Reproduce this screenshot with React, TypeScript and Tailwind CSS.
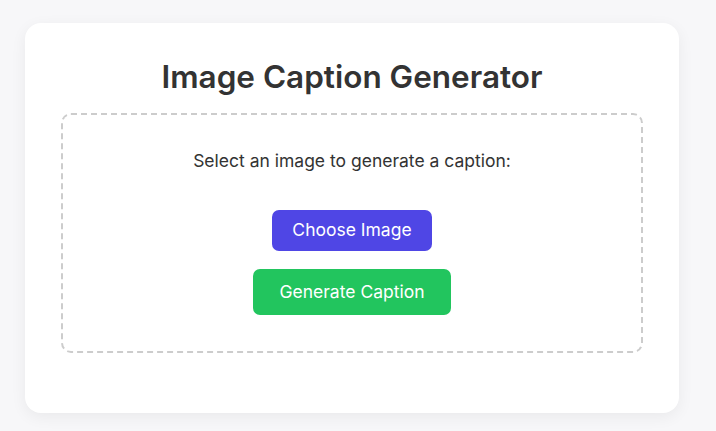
import React from "react";

export default function App() {
  return (
    <div
      className="min-h-[431px] w-full bg-[#f7f7f9] pt-[23px] pl-[25px]"
      style={{ fontFamily: "Inter, 'Noto Sans', sans-serif" }}
    >
      <div className="w-[654px] h-[390px] bg-white rounded-[16px] shadow-[0_4px_16px_rgba(0,0,0,0.06)] px-[36px] pt-[35px] box-border">
        <h1 className="text-[31.5px] leading-[37px] font-semibold text-[#333] text-center mb-[18px]">
          Image Caption Generator
        </h1>
        <div className="border-2 border-dashed border-[#cccccc] rounded-[10px] h-[240px] flex flex-col items-center pt-[34px] box-border">
          <p className="text-[17.5px] leading-[24px] text-[#333]">
            Select an image to generate a caption:
          </p>
          <button className="mt-[37px] w-[160px] h-[41px] rounded-[7px] bg-[#4f46e5] text-white text-[17.5px]">
            Choose Image
          </button>
          <button className="mt-[18px] w-[198px] h-[46px] rounded-[7px] bg-[#22c55e] text-white text-[17.5px]">
            Generate Caption
          </button>
        </div>
      </div>
    </div>
  );
}
